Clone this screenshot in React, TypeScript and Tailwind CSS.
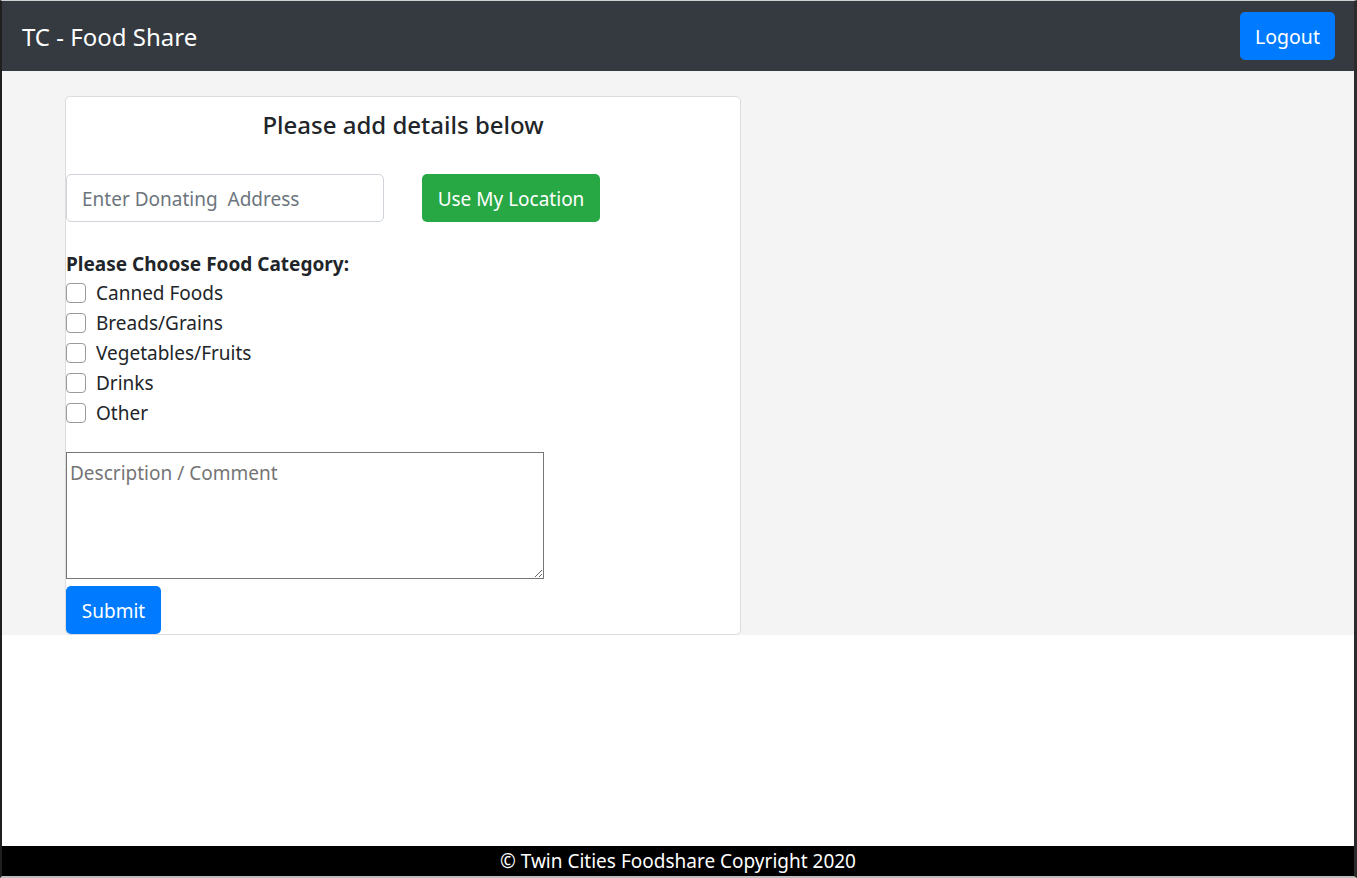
import React from "react";

const font = { fontFamily: '"Noto Sans", "Open Sans", sans-serif' };

function Check({ label }: { label: string }) {
  return (
    <label className="flex h-[30px] shrink-0 items-center">
      <span className="box-border h-[20px] w-[20px] rounded-[4px] border border-[#9a9a9a] bg-white" />
      <span className="ml-[10px] text-[19px] text-[#212529]">{label}</span>
    </label>
  );
}

export default function App() {
  return (
    <div
      style={font}
      className="box-border flex h-[878px] w-[1357px] flex-col overflow-hidden border-t border-l-2 border-r-[3px] border-b-2 border-t-[#cfcfcf] border-l-[#1f1f1f] border-r-[#2b2b2b] border-b-[#bdbdbd] bg-white"
    >
      <nav className="flex h-[70px] shrink-0 items-center justify-between bg-[#343a40] pl-[20px] pr-[19px]">
        <span className="pt-[2px] text-[24px] leading-[30px] text-white">TC - Food Share</span>
        <button className="h-[48px] w-[95px] rounded-[5px] bg-[#007bff] pt-[2px] text-[19.5px] text-white">Logout</button>
      </nav>
      <main className="shrink-0 bg-[#f4f4f4] pl-[63px] pt-[25px]">
        <div className="box-border flex w-[676px] flex-col rounded-[5px] border border-[#dcdcdc] bg-white">
          <h4 className="pt-[13px] text-center text-[24px] font-medium leading-[30px] text-[#212529]">Please add details below</h4>
          <div className="mt-[34px] flex items-center">
            <input
              placeholder="Enter Donating  Address"
              className="box-border h-[48px] w-[318px] rounded-[5px] border border-[#ced4da] px-[15px] pt-[2px] text-[19px] text-[#495057] placeholder:text-[#6c757d] outline-none"
            />
            <button className="ml-[38px] h-[48px] w-[178px] rounded-[5px] bg-[#28a745] pt-[2px] text-[19px] text-white">Use My Location</button>
          </div>
          <div className="mt-[26px] h-[30px] pt-[1px] text-[19px] font-bold leading-[30px] text-[#212529]">Please Choose Food Category:</div>
          <Check label="Canned Foods" />
          <Check label="Breads/Grains" />
          <Check label="Vegetables/Fruits" />
          <Check label="Drinks" />
          <Check label="Other" />
          <textarea
            placeholder="Description / Comment"
            className="mt-[24px] box-border h-[127px] min-h-[127px] w-[478px] shrink-0 resize-y border border-[#767676] px-[3px] pt-[6px] text-[19px] leading-[28px] placeholder:text-[#757575] outline-none"
          />
          <button className="mt-[7px] h-[48px] w-[95px] shrink-0 rounded-[5px] bg-[#007bff] pt-[2px] text-[19px] text-white">Submit</button>
        </div>
      </main>
      <div className="flex-1" />
      <footer className="flex h-[30px] shrink-0 items-center justify-center bg-black pt-[1px] text-[19px] text-white">
        © Twin Cities Foodshare Copyright 2020
      </footer>
    </div>
  );
}
